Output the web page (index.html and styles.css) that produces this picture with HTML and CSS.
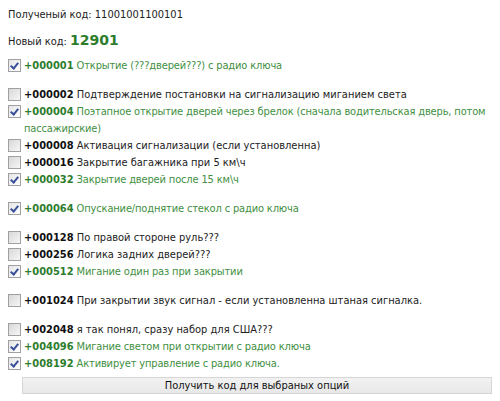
FILE: index.html
```html
<!DOCTYPE html>
<html lang="ru">
<head>
  <meta charset="UTF-8" />
  <title>Кодирование опций</title>
  <link rel="stylesheet" href="styles.css">
</head>
<body>
  <div class="page">
    <p class="line">Полученый код: 11001001100101</p>
    <p class="line">Новый код: <b class="new-code">12901</b></p>

    <form class="options">
      <div class="group">
        <label class="opt on"><span class="box"></span><span class="txt"><b>+000001</b> Открытие (???дверей???) с радио ключа</span></label>
      </div>
      <div class="group">
        <label class="opt"><span class="box"></span><span class="txt"><b>+000002</b> Подтверждение постановки на сигнализацию миганием света</span></label>
        <label class="opt on"><span class="box"></span><span class="txt"><b>+000004</b> Поэтапное открытие дверей через брелок (сначала водительская дверь, потом пассажирские)</span></label>
        <label class="opt"><span class="box"></span><span class="txt"><b>+000008</b> Активация сигнализации (если установленна)</span></label>
        <label class="opt"><span class="box"></span><span class="txt"><b>+000016</b> Закрытие багажника при 5 км\ч</span></label>
        <label class="opt on"><span class="box"></span><span class="txt"><b>+000032</b> Закрытие дверей после 15 км\ч</span></label>
      </div>
      <div class="group">
        <label class="opt on"><span class="box"></span><span class="txt"><b>+000064</b> Опускание/поднятие стекол с радио ключа</span></label>
      </div>
      <div class="group">
        <label class="opt"><span class="box"></span><span class="txt"><b>+000128</b> По правой стороне руль???</span></label>
        <label class="opt"><span class="box"></span><span class="txt"><b>+000256</b> Логика задних дверей???</span></label>
        <label class="opt on"><span class="box"></span><span class="txt"><b>+000512</b> Мигание один раз при закрытии</span></label>
      </div>
      <div class="group">
        <label class="opt"><span class="box"></span><span class="txt"><b>+001024</b> При закрытии звук сигнал - если установленна штаная сигналка.</span></label>
      </div>
      <div class="group last">
        <label class="opt"><span class="box"></span><span class="txt"><b>+002048</b> я так понял, сразу набор для США???</span></label>
        <label class="opt on"><span class="box"></span><span class="txt"><b>+004096</b> Мигание светом при открытии с радио ключа</span></label>
        <label class="opt on"><span class="box"></span><span class="txt"><b>+008192</b> Активирует управление с радио ключа.</span></label>
      </div>
      <button type="button" class="get-code">Получить код для выбраных опций</button>
    </form>
  </div>
</body>
</html>
```

FILE: styles.css
```css
body {
  margin: 0;
  font-family: "DejaVu Sans Condensed", "DejaVu Sans", sans-serif;
  font-size: 11px;
  color: #222;
  background: #fff;
}

.page {
  padding: 7px 8px 0 8px;
}

.line {
  margin: 0 0 9px 0;
  line-height: 16px;
  height: 16px;
}

.new-code {
  color: #2d7d2d;
  font-size: 14px;
  font-family: Verdana, "DejaVu Sans", sans-serif;
}

.options {
  margin-top: 9px;
}

.group {
  margin-bottom: 12px;
}

.group.last {
  margin-bottom: 0;
}

.opt {
  display: flex;
  align-items: flex-start;
  line-height: 17px;
}

.opt .box {
  flex: 0 0 auto;
  width: 11px;
  height: 11px;
  margin: 2px 3px 0 0;
  border: 1px solid #a0a0a0;
  background: linear-gradient(135deg, #d8d8d8, #f6f6f6);
  position: relative;
}

.opt.on .box {
  background: linear-gradient(135deg, #e4e4e4, #ffffff);
}

.opt.on .box::after {
  content: "";
  position: absolute;
  left: 3px;
  top: 1px;
  width: 3px;
  height: 6px;
  border: solid #3a4f9a;
  border-width: 0 2px 2px 0;
  transform: rotate(40deg);
}

.opt b {
  color: #111;
}

.opt.on .txt {
  color: #3f8f3f;
  letter-spacing: -0.15px;
}

.opt.on b {
  color: #2d7d2d;
  letter-spacing: 0;
}

.get-code {
  display: block;
  margin: 5px 0 0 14px;
  width: 470px;
  height: 17px;
  padding: 0;
  font-family: "DejaVu Sans Condensed", "DejaVu Sans", sans-serif;
  font-size: 11px;
  color: #111;
  background: linear-gradient(#f2f2f2, #e8e8e8);
  border: 1px solid #d6d6d6;
}
```
